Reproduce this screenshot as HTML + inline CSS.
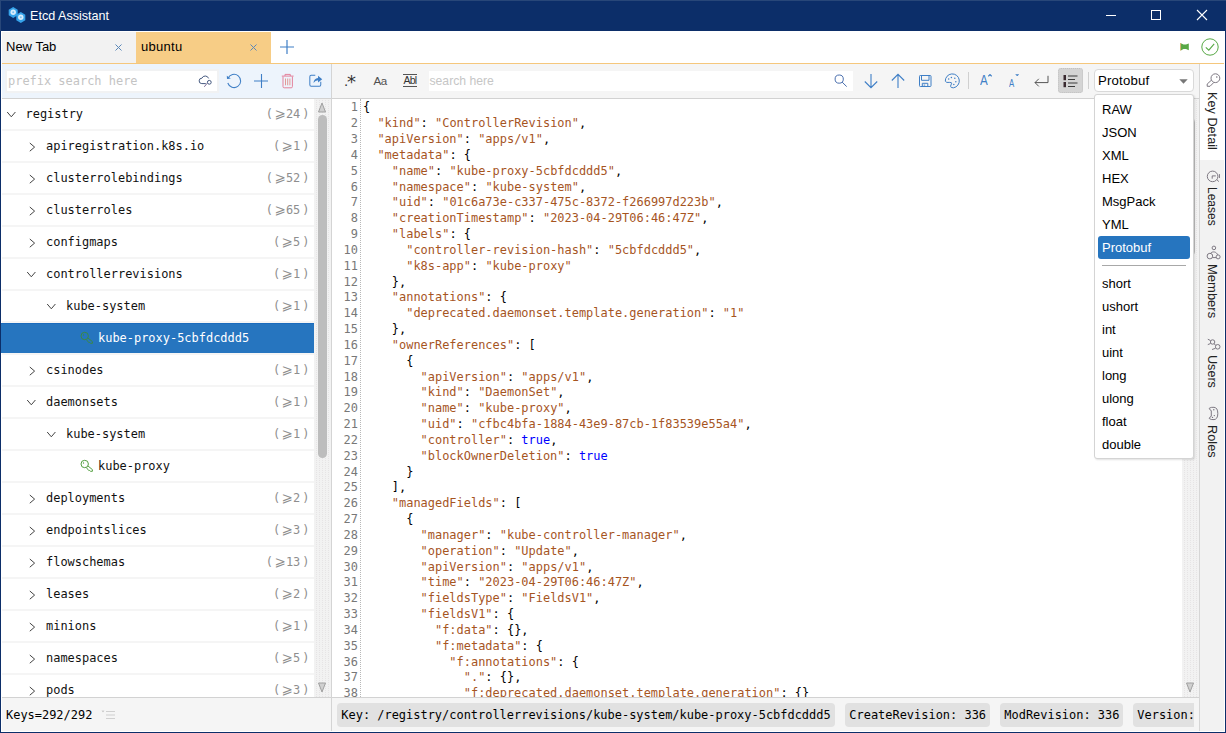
<!DOCTYPE html>
<html lang="en"><head><meta charset="utf-8"><title>Etcd Assistant</title>
<style>
*{box-sizing:border-box;margin:0;padding:0}
html,body{width:1226px;height:733px;overflow:hidden;background:#fff}
body{position:relative;font-family:"Liberation Sans","DejaVu Sans",sans-serif;font-size:12px;color:#000}
.abs{position:absolute}
#win{position:absolute;left:0;top:0;width:1226px;height:733px;overflow:hidden;background:#fff}
#title{position:absolute;left:0;top:0;width:1226px;height:31px;background:#0c2e69}
#title .t{position:absolute;left:30px;top:9px;color:#fff;font-size:12.6px;line-height:15px;white-space:nowrap}
#bl{position:absolute;left:0;top:0;width:1px;height:733px;background:#0c2e69}
#br{position:absolute;left:1225px;top:0;width:1px;height:733px;background:#0c2e69}
#bb{position:absolute;left:0;top:732px;width:1226px;height:1px;background:#0c2e69}
#tabs{position:absolute;left:1px;top:31px;width:1224px;height:33px;background:#fff;border-bottom:1px solid #f5c77c}
.tab{position:absolute;top:0;height:32px;width:135px;font-size:13px;line-height:32px;padding-left:5px;white-space:nowrap}
.tab .x{position:absolute;right:14px;top:12.5px;width:7px;height:7px}
#ltb{position:absolute;left:1px;top:64px;width:330px;height:35px;background:#edf4fc;border-bottom:1px solid #d2d2d2}
#lsearch{position:absolute;left:6px;top:7px;width:210px;height:20px;background:#fff;box-shadow:0 0 0 2px #f1f2f3;font-family:"DejaVu Sans Mono","Liberation Mono",monospace;font-size:11.96px;line-height:20px;color:#c4c4c4;padding-left:1px;white-space:nowrap}
#tree{position:absolute;left:1px;top:99px;width:313px;height:598px;overflow:hidden;background:#fff;font-family:"DejaVu Sans Mono","Liberation Mono",monospace;font-size:11.96px}
.row{position:relative;height:32px;border-bottom:2px solid #f5f5f5;line-height:31px;white-space:nowrap;color:#111}
.row.sel{background:#2675bf;color:#fff;box-shadow:inset 0 1px 0 #1b6bbd}
.row .c{position:absolute;right:4.5px;top:0;color:#8e8e8e;font-family:"DejaVu Sans Mono","Liberation Mono",monospace;font-size:11.96px}
.row .c b{display:inline-block;width:12.9px;padding-left:1.2px;text-align:center;font-weight:normal;font-family:"DejaVu Sans","Liberation Sans","DejaVu Sans",sans-serif;font-size:13.5px;line-height:10px}
.row .c i{font-style:normal;margin-left:2px}
.row svg{position:absolute}
#lscroll{position:absolute;left:314px;top:99px;width:17px;height:598px;background:#f2f2f2 radial-gradient(circle at 0.5px 0.5px,#e6e4e5 0.5px,transparent 0.75px) 2px 1px/3px 2px}
#vdiv{position:absolute;left:331px;top:64px;width:1px;height:668px;background:#d4d4d4}
#rtb{position:absolute;left:332px;top:64px;width:867px;height:35px;background:#f5f5f5;border-bottom:1px solid #d2d2d2}
#rtb .star{font-family:"DejaVu Sans","Liberation Sans","DejaVu Sans",sans-serif;font-size:18px;line-height:22px;color:#333}
#rsearch{position:absolute;left:97px;top:7px;width:424px;height:20px;background:#fff;font-size:12.2px;line-height:20px;color:#c6c6c6;padding-left:0.5px}
#code{position:absolute;left:332px;top:99px;width:850px;height:598px;overflow:hidden;background:#fff;font-family:"DejaVu Sans Mono","Liberation Mono",monospace;font-size:11.96px;line-height:15.8333px;color:#000}
#code .ln{position:absolute;left:0;top:1.4px;width:26px;text-align:right;color:#787878;white-space:pre}
#code .gl{position:absolute;left:28px;top:0;width:0;height:600px;border-left:1px dotted #b8b8b8}
#code .cl{position:absolute;left:31px;height:16px;line-height:16px;white-space:pre}
#code .cl .n{position:absolute;left:-31px;top:0;width:26px;text-align:right;color:#787878}
.s{color:#a6551f}
.k{color:#0000ff}
#rscroll{position:absolute;left:1182px;top:99px;width:17px;height:598px;background:#f2f2f2 radial-gradient(circle at 0.5px 0.5px,#e6e4e5 0.5px,transparent 0.75px) 2px 1px/3px 2px}
#side{position:absolute;left:1199px;top:64px;width:26px;height:668px;background:#f2f2f2;border-left:1px solid #d6d6d6}
.vt{position:absolute;left:-1px;width:26px;writing-mode:vertical-rl;font-size:13px;line-height:26px;white-space:nowrap;color:#222}
#lstat{position:absolute;left:1px;top:697px;width:330px;height:35px;background:#f5f5f5;border-top:1px solid #d2d2d2;font-family:"DejaVu Sans Mono","Liberation Mono",monospace;font-size:11.96px;line-height:35px;padding-left:5px}
#rstat{position:absolute;left:332px;top:697px;width:867px;height:35px;background:#f5f5f5;border-top:1px solid #d2d2d2;font-family:"DejaVu Sans Mono","Liberation Mono",monospace;font-size:11.96px;overflow:hidden;white-space:nowrap}
.chip{position:absolute;top:5px;height:24px;line-height:24px;background:#e1e1e1;border-radius:4px;padding:0 4px 0 4.3px;white-space:nowrap}
#combo{position:absolute;left:1094px;top:69px;width:100px;height:23px;background:#fff;border:1px solid #d9d9d9;border-radius:4px;font-size:13.2px;letter-spacing:.2px;line-height:22px;padding-left:3px}
#pop{position:absolute;left:1094px;top:94px;width:100px;height:365px;box-shadow:1px 1px 2px rgba(0,0,0,.12);background:#fff;border:1px solid #d4d4d4;border-radius:3px;font-size:13px}
#pop .i{position:absolute;left:3px;width:92px;height:23px;line-height:23px;padding-left:4px;border-radius:3px;white-space:nowrap}
#pop .i.sel{background:#2675bf;color:#fff}
</style></head>
<body>
<div id="win">
<div id="title">
<svg class="abs" style="left:0;top:0" width="30" height="30" viewBox="0 0 30 30">
<polygon points="13.2,6.9 17.7,9.7 17.7,15.2 13.2,17.9 8.7,15.2 8.7,9.7" fill="#36a3ea"/>
<polygon points="20.8,12.0 25.3,14.8 25.3,20.2 20.8,23.0 16.3,20.2 16.3,14.8" fill="#36a3ea"/>
<circle cx="13.2" cy="12.2" r="2.7" fill="#d9ecfb"/><circle cx="20.8" cy="17.3" r="2.7" fill="#d9ecfb"/>
<circle cx="13.2" cy="12.2" r="1" fill="#7cc0f0"/><circle cx="20.8" cy="17.3" r="1" fill="#7cc0f0"/>
</svg>
<svg class="abs" style="left:1100px;top:5px" width="120" height="22" viewBox="0 0 120 22">
<path d="M6 10.5 H16" stroke="#fff" stroke-width="1"/>
<rect x="51.5" y="5.5" width="9" height="9" fill="none" stroke="#fff" stroke-width="1"/>
<path d="M97 5 L107 15 M107 5 L97 15" stroke="#fff" stroke-width="1.1"/>
</svg>
<div class="t">Etcd Assistant</div>
</div>
<div id="tabs">
<div class="tab" style="left:0;background:#f2f2f2">New Tab<svg class="x" viewBox="0 0 7 7"><path d="M0.5 0.5 L6.5 6.5 M6.5 0.5 L0.5 6.5" stroke="#5b87b8" stroke-width="1" fill="none"/></svg></div>
<div class="tab" style="left:135px;background:#f7cd86;letter-spacing:.3px">ubuntu<svg class="x" viewBox="0 0 7 7"><path d="M0.5 0.5 L6.5 6.5 M6.5 0.5 L0.5 6.5" stroke="#5b87b8" stroke-width="1" fill="none"/></svg></div>
<svg class="abs" style="left:278px;top:8px" width="16" height="16" viewBox="0 0 16 16"><path d="M8 1 V15 M1 8 H15" stroke="#3f7fc6" stroke-width="1.2"/></svg>
<svg class="abs" style="left:1179px;top:11px" width="10" height="10" viewBox="0 0 10 10"><path d="M0.8 1.2 L3.5 2.6 L6 2.6 L8.8 1.4 V8.2 L6 7 L3.5 7 L0.8 8.4 Z" fill="#57a845"/><path d="M0.6 1 V8.6" stroke="#c9a24a" stroke-width="0.8"/></svg>
<svg class="abs" style="left:1199.5px;top:7.2px" width="18" height="18" viewBox="0 0 18 18"><circle cx="9" cy="9" r="8.2" fill="none" stroke="#57a845" stroke-width="1"/><path d="M4.8 9.3 L7.8 12.2 L13.2 5.8" fill="none" stroke="#57a845" stroke-width="1.1"/></svg>
</div>
<div id="ltb"><div id="lsearch">prefix search here</div>
<svg class="abs" style="left:189px;top:0" width="60" height="36" viewBox="0 0 60 36">
<path d="M15.8 19.6 H11.8 A2.7 2.7 0 0 1 11.9 14.2 A3.6 3.6 0 0 1 18.6 14.4" fill="none" stroke="#3a4f78" stroke-width="0.95"/>
<circle cx="19.3" cy="18.3" r="1.9" fill="none" stroke="#3a4f78" stroke-width="0.95"/>
<path d="M17.2 19.2 L14.3 22.8" stroke="#6a5a88" stroke-width="0.9"/>
<path d="M38 14.4 A6.6 6.6 0 1 1 37.8 19" fill="none" stroke="#3f7fc6" stroke-width="1.05"/>
<path d="M36.8 11.8 L37 14.9 L40.8 14.5 Z" fill="#3f7fc6"/>
</svg>
<svg class="abs" style="left:243px;top:0" width="90" height="36" viewBox="0 0 90 36"><path d="M17.5 10 V24 M10 17 H24" stroke="#3f7fc6" stroke-width="1.1"/>
<path d="M37.8 12.1 H49.6 M41 12 V10.4 H46.3 V12 M39 12.5 V22.6 Q39 23.8 40.2 23.8 H47.2 Q48.4 23.8 48.4 22.6 V12.5" fill="none" stroke="#e3829c" stroke-width="1"/><path d="M41.5 14.5 V21.3 M43.7 14.5 V21.3 M45.9 14.5 V21.3" stroke="#e0908a" stroke-width="0.9"/></svg>
<svg class="abs" style="left:307px;top:9px" width="15.5" height="15.5" viewBox="0 0 17 17"><path d="M8 2.5 H3.5 Q2 2.5 2 4 V13 Q2 14.5 3.5 14.5 H12.5 Q14 14.5 14 13 V9.5" fill="none" stroke="#3f7fc6" stroke-width="1.1"/><path d="M6 11 Q6.5 6 11 5.6 V3 L15.6 6.8 L11 10.5 V8 Q8 8 6 11 Z" fill="#3f7fc6"/></svg>
</div>
<div id="tree">
<div class="row"><svg style="left:5px;top:10px" width="12" height="10" viewBox="0 0 12 10"><path d="M1.2 3 L5.3 7.8 L9.4 3" fill="none" stroke="#444" stroke-width="1"/></svg><span style="position:absolute;left:24.5px;top:0">registry</span><span class="c">(<b>&#x2A7E;</b>24<i>)</i></span></div>
<div class="row"><svg style="left:26.5px;top:8.5px" width="10" height="14" viewBox="0 0 10 14"><path d="M1.8 3 L6.6 7.1 L1.8 11.2" fill="none" stroke="#444" stroke-width="1"/></svg><span style="position:absolute;left:45px;top:0">apiregistration.k8s.io</span><span class="c">(<b>&#x2A7E;</b>1<i>)</i></span></div>
<div class="row"><svg style="left:26.5px;top:8.5px" width="10" height="14" viewBox="0 0 10 14"><path d="M1.8 3 L6.6 7.1 L1.8 11.2" fill="none" stroke="#444" stroke-width="1"/></svg><span style="position:absolute;left:45px;top:0">clusterrolebindings</span><span class="c">(<b>&#x2A7E;</b>52<i>)</i></span></div>
<div class="row"><svg style="left:26.5px;top:8.5px" width="10" height="14" viewBox="0 0 10 14"><path d="M1.8 3 L6.6 7.1 L1.8 11.2" fill="none" stroke="#444" stroke-width="1"/></svg><span style="position:absolute;left:45px;top:0">clusterroles</span><span class="c">(<b>&#x2A7E;</b>65<i>)</i></span></div>
<div class="row"><svg style="left:26.5px;top:8.5px" width="10" height="14" viewBox="0 0 10 14"><path d="M1.8 3 L6.6 7.1 L1.8 11.2" fill="none" stroke="#444" stroke-width="1"/></svg><span style="position:absolute;left:45px;top:0">configmaps</span><span class="c">(<b>&#x2A7E;</b>5<i>)</i></span></div>
<div class="row"><svg style="left:25px;top:10px" width="12" height="10" viewBox="0 0 12 10"><path d="M1.2 3 L5.3 7.8 L9.4 3" fill="none" stroke="#444" stroke-width="1"/></svg><span style="position:absolute;left:45px;top:0">controllerrevisions</span><span class="c">(<b>&#x2A7E;</b>1<i>)</i></span></div>
<div class="row"><svg style="left:45px;top:10px" width="12" height="10" viewBox="0 0 12 10"><path d="M1.2 3 L5.3 7.8 L9.4 3" fill="none" stroke="#444" stroke-width="1"/></svg><span style="position:absolute;left:65px;top:0">kube-system</span><span class="c">(<b>&#x2A7E;</b>1<i>)</i></span></div>
<div class="row sel"><svg style="left:79px;top:8px" width="15" height="15" viewBox="0 0 15 15"><circle cx="4.7" cy="5" r="3.7" fill="none" stroke="#3b8a45" stroke-width="1"/><circle cx="3.5" cy="4" r="0.7" fill="#3b8a45"/><path d="M7.9 6.9 L12.4 10.6 V12.3 H10.4 L9.6 11.4 L8.8 11.6 L6.3 8.5" fill="none" stroke="#3b8a45" stroke-width="1"/></svg><span style="position:absolute;left:97px;top:0">kube-proxy-5cbfdcddd5</span></div>
<div class="row"><svg style="left:26.5px;top:8.5px" width="10" height="14" viewBox="0 0 10 14"><path d="M1.8 3 L6.6 7.1 L1.8 11.2" fill="none" stroke="#444" stroke-width="1"/></svg><span style="position:absolute;left:45px;top:0">csinodes</span><span class="c">(<b>&#x2A7E;</b>1<i>)</i></span></div>
<div class="row"><svg style="left:25px;top:10px" width="12" height="10" viewBox="0 0 12 10"><path d="M1.2 3 L5.3 7.8 L9.4 3" fill="none" stroke="#444" stroke-width="1"/></svg><span style="position:absolute;left:45px;top:0">daemonsets</span><span class="c">(<b>&#x2A7E;</b>1<i>)</i></span></div>
<div class="row"><svg style="left:45px;top:10px" width="12" height="10" viewBox="0 0 12 10"><path d="M1.2 3 L5.3 7.8 L9.4 3" fill="none" stroke="#444" stroke-width="1"/></svg><span style="position:absolute;left:65px;top:0">kube-system</span><span class="c">(<b>&#x2A7E;</b>1<i>)</i></span></div>
<div class="row"><svg style="left:79px;top:8px" width="15" height="15" viewBox="0 0 15 15"><circle cx="4.7" cy="5" r="3.7" fill="none" stroke="#55a043" stroke-width="1"/><circle cx="3.5" cy="4" r="0.7" fill="#55a043"/><path d="M7.9 6.9 L12.4 10.6 V12.3 H10.4 L9.6 11.4 L8.8 11.6 L6.3 8.5" fill="none" stroke="#55a043" stroke-width="1"/></svg><span style="position:absolute;left:97px;top:0">kube-proxy</span></div>
<div class="row"><svg style="left:26.5px;top:8.5px" width="10" height="14" viewBox="0 0 10 14"><path d="M1.8 3 L6.6 7.1 L1.8 11.2" fill="none" stroke="#444" stroke-width="1"/></svg><span style="position:absolute;left:45px;top:0">deployments</span><span class="c">(<b>&#x2A7E;</b>2<i>)</i></span></div>
<div class="row"><svg style="left:26.5px;top:8.5px" width="10" height="14" viewBox="0 0 10 14"><path d="M1.8 3 L6.6 7.1 L1.8 11.2" fill="none" stroke="#444" stroke-width="1"/></svg><span style="position:absolute;left:45px;top:0">endpointslices</span><span class="c">(<b>&#x2A7E;</b>3<i>)</i></span></div>
<div class="row"><svg style="left:26.5px;top:8.5px" width="10" height="14" viewBox="0 0 10 14"><path d="M1.8 3 L6.6 7.1 L1.8 11.2" fill="none" stroke="#444" stroke-width="1"/></svg><span style="position:absolute;left:45px;top:0">flowschemas</span><span class="c">(<b>&#x2A7E;</b>13<i>)</i></span></div>
<div class="row"><svg style="left:26.5px;top:8.5px" width="10" height="14" viewBox="0 0 10 14"><path d="M1.8 3 L6.6 7.1 L1.8 11.2" fill="none" stroke="#444" stroke-width="1"/></svg><span style="position:absolute;left:45px;top:0">leases</span><span class="c">(<b>&#x2A7E;</b>2<i>)</i></span></div>
<div class="row"><svg style="left:26.5px;top:8.5px" width="10" height="14" viewBox="0 0 10 14"><path d="M1.8 3 L6.6 7.1 L1.8 11.2" fill="none" stroke="#444" stroke-width="1"/></svg><span style="position:absolute;left:45px;top:0">minions</span><span class="c">(<b>&#x2A7E;</b>1<i>)</i></span></div>
<div class="row"><svg style="left:26.5px;top:8.5px" width="10" height="14" viewBox="0 0 10 14"><path d="M1.8 3 L6.6 7.1 L1.8 11.2" fill="none" stroke="#444" stroke-width="1"/></svg><span style="position:absolute;left:45px;top:0">namespaces</span><span class="c">(<b>&#x2A7E;</b>5<i>)</i></span></div>
<div class="row"><svg style="left:26.5px;top:8.5px" width="10" height="14" viewBox="0 0 10 14"><path d="M1.8 3 L6.6 7.1 L1.8 11.2" fill="none" stroke="#444" stroke-width="1"/></svg><span style="position:absolute;left:45px;top:0">pods</span><span class="c">(<b>&#x2A7E;</b>3<i>)</i></span></div>
</div>
<div id="lscroll"><svg class="abs" style="left:3px;top:3px" width="10" height="11" viewBox="0 0 10 11"><path d="M5 1 L8.5 10 H1.5 Z" fill="#d0d0d0" stroke="#a0a0a0" stroke-width="1"/></svg>
<div class="abs" style="left:4px;top:16px;width:9px;height:343px;background:#bdbdbd;border-radius:4.5px"></div>
<svg class="abs" style="left:3px;top:583px" width="10" height="11" viewBox="0 0 10 11"><path d="M5 10 L8.5 1 H1.5 Z" fill="#d0d0d0" stroke="#a0a0a0" stroke-width="1"/></svg></div>
<div id="vdiv"></div>
<div id="rtb"><div id="rsearch">search here</div>
<div class="abs" style="left:12px;top:6px;font-size:15px;line-height:22px;color:#333">.</div>
<div class="abs star" style="left:15px;top:7px">*</div>
<div class="abs" style="left:41.5px;top:6px;font-size:11.6px;line-height:22px;color:#505050;letter-spacing:-.5px">Aa</div>
<div class="abs" style="left:71px;top:10px;width:14px;height:13px;border-top:1px solid #555;border-bottom:1px solid #555;font-size:10.5px;line-height:11px;color:#333;letter-spacing:-.8px;text-align:center;white-space:nowrap">Abl</div>
<svg class="abs" style="left:502px;top:10px" width="15" height="15" viewBox="0 0 15 15"><circle cx="5.2" cy="5.1" r="4.1" fill="none" stroke="#4a6fae" stroke-width="1"/><path d="M8.1 8.1 L12.7 12.6" stroke="#4a6fae" stroke-width="1"/></svg>
<svg class="abs" style="left:531px;top:9px" width="16" height="17" viewBox="0 0 16 17"><path d="M8 1 V14.5 M1.8 8.5 L8 14.7 L14.2 8.5" fill="none" stroke="#3f7fc6" stroke-width="1.1"/></svg>
<svg class="abs" style="left:558px;top:9px" width="16" height="17" viewBox="0 0 16 17"><path d="M8 15 V1.5 M1.8 7.5 L8 1.3 L14.2 7.5" fill="none" stroke="#3f7fc6" stroke-width="1.1"/></svg>
<svg class="abs" style="left:578px;top:2px" width="60" height="30" viewBox="0 0 60 30"><rect x="9.5" y="9.5" width="11.5" height="11" rx="0.8" fill="none" stroke="#3f7fc6" stroke-width="1"/><path d="M11.5 9.5 V14.3 H19 V9.5 M12.3 20.5 V17.3 H17.8 V20.5" fill="none" stroke="#3f7fc6" stroke-width="1"/><rect x="13.6" y="18.3" width="1.6" height="2" fill="#3f7fc6" opacity=".55"/>
<path d="M35.3 15.2 A7 7 0 1 1 43.5 21.8 Q40.6 22 40.6 20.2 Q40.8 18.8 41.6 17.8 Q42.2 16.4 39.8 16.4 Q36 17 35.3 15.2 Z" fill="none" stroke="#3f7fc6" stroke-width="1"/>
<circle cx="38.7" cy="13" r="0.75" fill="#3f7fc6"/><circle cx="41.4" cy="11.5" r="0.75" fill="#3f7fc6"/><circle cx="44.8" cy="12.2" r="0.75" fill="#3f7fc6"/><circle cx="45.8" cy="15.7" r="0.75" fill="#3f7fc6"/><circle cx="43.8" cy="18.4" r="0.75" fill="#3f7fc6"/></svg>
<div class="abs" style="left:636px;top:8px;width:1px;height:17px;background:#d0d0d0"></div>
<div class="abs" style="left:648.3px;top:5px;font-size:14.5px;line-height:22px;color:#3f7fc6;transform:scaleX(.8);transform-origin:0 0">A</div>
<svg class="abs" style="left:655.5px;top:10.3px" width="4" height="2.6" viewBox="0 0 4 2.6"><path d="M0.3 2.3 L2 0.5 L3.7 2.3" fill="none" stroke="#3f7fc6" stroke-width="1.1"/></svg>
<div class="abs" style="left:677px;top:8.5px;font-size:10px;line-height:22px;color:#3f7fc6;transform:scaleX(.78);transform-origin:0 0">A</div>
<svg class="abs" style="left:682.5px;top:9.8px" width="4.4" height="2.4" viewBox="0 0 4.4 2.4"><path d="M0.2 0.2 H4.2 L2.2 2.3 Z" fill="#3f7fc6"/></svg>
<svg class="abs" style="left:701px;top:9.5px" width="17" height="15" viewBox="0 0 17 15"><path d="M15 1.8 V8.6 H2 M5.8 4.8 L2 8.6 L5.8 12.4" fill="none" stroke="#555" stroke-width="1"/></svg>
<div class="abs" style="left:726px;top:4px;width:25px;height:25px;background:#d4d4d4;border:1px dotted #c2c2c2;border-radius:3px"></div>
<svg class="abs" style="left:731px;top:9.5px" width="16" height="15" viewBox="0 0 16 15"><path d="M5 2 H14.5 M5 5.5 H12 M5 9 H14.5 M5 12.5 H12" stroke="#3a3a3a" stroke-width="1"/><rect x="0.5" y="1" width="2.5" height="5.2" fill="#3a2a30"/><rect x="0.5" y="8" width="2.5" height="5.2" fill="#3a2a30"/></svg>
<div class="abs" style="left:756px;top:8px;width:1px;height:17px;background:#d0d0d0"></div>
</div>
<div id="code"><div class="gl"></div><div class="cl" style="top:0px"><span class="n">1</span>{</div>
<div class="cl" style="top:16px"><span class="n">2</span>  <span class="s">"kind"</span>: <span class="s">"ControllerRevision"</span>,</div>
<div class="cl" style="top:32px"><span class="n">3</span>  <span class="s">"apiVersion"</span>: <span class="s">"apps/v1"</span>,</div>
<div class="cl" style="top:48px"><span class="n">4</span>  <span class="s">"metadata"</span>: {</div>
<div class="cl" style="top:64px"><span class="n">5</span>    <span class="s">"name"</span>: <span class="s">"kube-proxy-5cbfdcddd5"</span>,</div>
<div class="cl" style="top:80px"><span class="n">6</span>    <span class="s">"namespace"</span>: <span class="s">"kube-system"</span>,</div>
<div class="cl" style="top:95px"><span class="n">7</span>    <span class="s">"uid"</span>: <span class="s">"01c6a73e-c337-475c-8372-f266997d223b"</span>,</div>
<div class="cl" style="top:111px"><span class="n">8</span>    <span class="s">"creationTimestamp"</span>: <span class="s">"2023-04-29T06:46:47Z"</span>,</div>
<div class="cl" style="top:127px"><span class="n">9</span>    <span class="s">"labels"</span>: {</div>
<div class="cl" style="top:143px"><span class="n">10</span>      <span class="s">"controller-revision-hash"</span>: <span class="s">"5cbfdcddd5"</span>,</div>
<div class="cl" style="top:159px"><span class="n">11</span>      <span class="s">"k8s-app"</span>: <span class="s">"kube-proxy"</span></div>
<div class="cl" style="top:175px"><span class="n">12</span>    },</div>
<div class="cl" style="top:190px"><span class="n">13</span>    <span class="s">"annotations"</span>: {</div>
<div class="cl" style="top:206px"><span class="n">14</span>      <span class="s">"deprecated.daemonset.template.generation"</span>: <span class="s">"1"</span></div>
<div class="cl" style="top:222px"><span class="n">15</span>    },</div>
<div class="cl" style="top:238px"><span class="n">16</span>    <span class="s">"ownerReferences"</span>: [</div>
<div class="cl" style="top:254px"><span class="n">17</span>      {</div>
<div class="cl" style="top:270px"><span class="n">18</span>        <span class="s">"apiVersion"</span>: <span class="s">"apps/v1"</span>,</div>
<div class="cl" style="top:285px"><span class="n">19</span>        <span class="s">"kind"</span>: <span class="s">"DaemonSet"</span>,</div>
<div class="cl" style="top:301px"><span class="n">20</span>        <span class="s">"name"</span>: <span class="s">"kube-proxy"</span>,</div>
<div class="cl" style="top:317px"><span class="n">21</span>        <span class="s">"uid"</span>: <span class="s">"cfbc4bfa-1884-43e9-87cb-1f83539e55a4"</span>,</div>
<div class="cl" style="top:333px"><span class="n">22</span>        <span class="s">"controller"</span>: <span class="k">true</span>,</div>
<div class="cl" style="top:349px"><span class="n">23</span>        <span class="s">"blockOwnerDeletion"</span>: <span class="k">true</span></div>
<div class="cl" style="top:365px"><span class="n">24</span>      }</div>
<div class="cl" style="top:380px"><span class="n">25</span>    ],</div>
<div class="cl" style="top:396px"><span class="n">26</span>    <span class="s">"managedFields"</span>: [</div>
<div class="cl" style="top:412px"><span class="n">27</span>      {</div>
<div class="cl" style="top:428px"><span class="n">28</span>        <span class="s">"manager"</span>: <span class="s">"kube-controller-manager"</span>,</div>
<div class="cl" style="top:444px"><span class="n">29</span>        <span class="s">"operation"</span>: <span class="s">"Update"</span>,</div>
<div class="cl" style="top:460px"><span class="n">30</span>        <span class="s">"apiVersion"</span>: <span class="s">"apps/v1"</span>,</div>
<div class="cl" style="top:475px"><span class="n">31</span>        <span class="s">"time"</span>: <span class="s">"2023-04-29T06:46:47Z"</span>,</div>
<div class="cl" style="top:491px"><span class="n">32</span>        <span class="s">"fieldsType"</span>: <span class="s">"FieldsV1"</span>,</div>
<div class="cl" style="top:507px"><span class="n">33</span>        <span class="s">"fieldsV1"</span>: {</div>
<div class="cl" style="top:523px"><span class="n">34</span>          <span class="s">"f:data"</span>: {},</div>
<div class="cl" style="top:539px"><span class="n">35</span>          <span class="s">"f:metadata"</span>: {</div>
<div class="cl" style="top:555px"><span class="n">36</span>            <span class="s">"f:annotations"</span>: {</div>
<div class="cl" style="top:570px"><span class="n">37</span>              <span class="s">"."</span>: {},</div>
<div class="cl" style="top:586px"><span class="n">38</span>              <span class="s">"f:deprecated.daemonset.template.generation"</span>: {}</div></div>
<div id="rscroll"><div class="abs" style="left:4px;top:19px;width:9px;height:138px;background:#bdbdbd;border-radius:4.5px"></div>
<svg class="abs" style="left:3px;top:583px" width="10" height="11" viewBox="0 0 10 11"><path d="M5 10 L8.5 1 H1.5 Z" fill="#d0d0d0" stroke="#a0a0a0" stroke-width="1"/></svg></div>
<div id="side"><div class="abs" style="left:0;top:0;width:25px;height:96px;background:#fff"></div>
<svg class="abs" style="left:-1px;top:2px" width="28" height="28" viewBox="0 0 28 28"><circle cx="16.4" cy="12.2" r="4.4" fill="none" stroke="#77727c" stroke-width="0.95"/><circle cx="17.8" cy="11" r="0.8" fill="#77727c"/><path d="M12.3 14.3 L8.2 18 V20.3 H11 L14.9 16.4" fill="none" stroke="#77727c" stroke-width="0.95"/></svg>
<div class="vt" style="top:28px;font-size:12.7px">Key Detail</div>
<svg class="abs" style="left:-1px;top:96px" width="28" height="28" viewBox="0 0 28 28"><circle cx="13.6" cy="16.4" r="5.3" fill="none" stroke="#77727c" stroke-width="0.95"/><path d="M16.8 15.9 H13.2 V18.7" fill="none" stroke="#77727c" stroke-width="0.95"/><path d="M20.4 14.1 V18 M18 19.9 L19.9 21.6" fill="none" stroke="#77727c" stroke-width="0.95"/></svg>
<div class="vt" style="top:123px;font-size:12px">Leases</div>
<svg class="abs" style="left:-1px;top:174px" width="28" height="28" viewBox="0 0 28 28"><circle cx="14.9" cy="9.9" r="1.8" fill="none" stroke="#77727c" stroke-width="0.95"/><circle cx="10.9" cy="18.1" r="2.8" fill="none" stroke="#77727c" stroke-width="0.95"/><circle cx="19.1" cy="18.9" r="2" fill="none" stroke="#77727c" stroke-width="0.95"/><path d="M11.5 15.3 A4.2 4.2 0 0 1 18.6 16.8 M13.5 19.6 H17.2" fill="none" stroke="#77727c" stroke-width="0.95"/></svg>
<div class="vt" style="top:200px">Members</div>
<svg class="abs" style="left:-1px;top:266px" width="28" height="28" viewBox="0 0 28 28"><circle cx="13.6" cy="12" r="2.2" fill="none" stroke="#77727c" stroke-width="0.95"/><path d="M8.8 9.2 L11.6 10.6 M8.8 14.6 L11.6 13.5" fill="none" stroke="#77727c" stroke-width="0.95"/><circle cx="18.7" cy="16.8" r="2.3" fill="none" stroke="#77727c" stroke-width="0.95"/><path d="M15 13.8 L16.8 15.2 M13 19.5 L16.5 18.3" fill="none" stroke="#77727c" stroke-width="0.95"/></svg>
<div class="vt" style="top:291px;font-size:12.6px">Users</div>
<svg class="abs" style="left:-1px;top:336px" width="28" height="28" viewBox="0 0 28 28"><path d="M10.2 8.3 Q12 7 15 7.3 Q18.8 7.6 18.8 13.5 Q18.8 19.3 15 19.6 Q12 19.9 10.2 18.5 Q10.5 17 12.3 16.3 V10.6 Q10.5 10 10.2 8.3 Z" fill="none" stroke="#77727c" stroke-width="0.95"/><circle cx="14.8" cy="9.7" r="0.7" fill="#77727c"/><circle cx="15.3" cy="15.6" r="0.7" fill="#77727c"/><circle cx="13.5" cy="17.4" r="0.7" fill="#77727c"/></svg>
<div class="vt" style="top:361px;font-size:12.8px">Roles</div></div>
<div id="lstat">Keys=292/292<svg class="abs" style="left:100px;top:12px" width="15" height="11" viewBox="0 0 15 11"><path d="M1 1.5 L3 1.5 M5 1.5 H14 M5 5 H14 M5 8.5 H14" stroke="#d0d0d0" stroke-width="1.2"/><path d="M0.5 0.5 L3.5 0.5 L2 2.5 Z" fill="#d0d0d0"/></svg></div>
<div id="rstat"><div class="abs" style="left:0;top:0;width:862px;height:34px;overflow:hidden">
<div class="chip" style="left:5px">Key: /registry/controllerrevisions/kube-system/kube-proxy-5cbfdcddd5</div>
<div class="chip" style="left:513px">CreateRevision: 336</div>
<div class="chip" style="left:668px">ModRevision: 336</div>
<div class="chip" style="left:801px;padding-right:30px">Version:</div>
</div></div>
<div id="combo">Protobuf<svg class="abs" style="left:84px;top:9px" width="9" height="5" viewBox="0 0 9 5"><path d="M0.3 0.3 L8.7 0.3 L4.5 4.7 Z" fill="#777"/></svg></div>
<div id="pop">
<div class="i" style="top:3px">RAW</div>
<div class="i" style="top:26px">JSON</div>
<div class="i" style="top:49px">XML</div>
<div class="i" style="top:72px">HEX</div>
<div class="i" style="top:95px">MsgPack</div>
<div class="i" style="top:118px">YML</div>
<div class="i sel" style="top:141px">Protobuf</div>
<div class="abs" style="left:7px;top:170px;width:84px;height:1px;background:#a8a8a8"></div>
<div class="i" style="top:177px">short</div>
<div class="i" style="top:200px">ushort</div>
<div class="i" style="top:223px">int</div>
<div class="i" style="top:246px">uint</div>
<div class="i" style="top:269px">long</div>
<div class="i" style="top:292px">ulong</div>
<div class="i" style="top:315px">float</div>
<div class="i" style="top:338px">double</div>
</div>
<div class="abs" style="left:1px;top:31px;width:1px;height:292px;background:#fff"></div><div class="abs" style="left:1px;top:353px;width:1px;height:379px;background:#fff"></div><div class="abs" style="left:1224px;top:31px;width:1px;height:701px;background:#fff"></div><div class="abs" style="left:1px;top:31px;width:1224px;height:1px;background:#fff"></div><div class="abs" style="left:1px;top:731px;width:1224px;height:1px;background:#fff"></div>
<div id="bl"></div><div id="br"></div><div id="bb"></div><div class="abs" style="left:0;top:0;width:1226px;height:1px;background:#284779"></div><div class="abs" style="left:0;top:0;width:1px;height:31px;background:#284779"></div>
</div>
</body></html>
